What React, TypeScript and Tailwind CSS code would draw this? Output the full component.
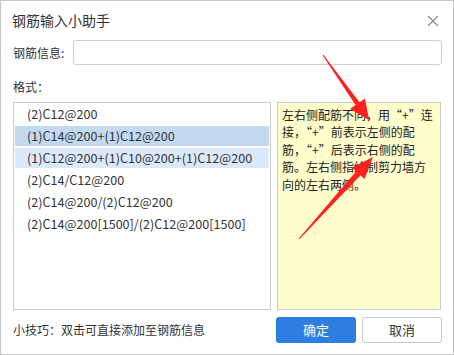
import React from "react";

const formats = [
  "(2)C12@200",
  "(1)C14@200+(1)C12@200",
  "(1)C12@200+(1)C10@200+(1)C12@200",
  "(2)C14/C12@200",
  "(2)C14@200/(2)C12@200",
  "(2)C14@200[1500]/(2)C12@200[1500]",
];

const tipLines = [
  "左右侧配筋不同，用“+”连",
  "接，“+”前表示左侧的配",
  "筋，“+”后表示右侧的配",
  "筋。左右侧指绘制剪力墙方",
  "向的左右两侧。",
];

export default function App() {
  const selected = 1;
  const hovered = 2;

  return (
    <div
      className="relative flex h-[355px] w-[454px] flex-col border border-[#c6c6c6] bg-white text-[12px] text-[#333]"
      style={{ fontFamily: '"Noto Sans CJK SC", "Noto Sans", sans-serif' }}
    >
      {/* 标题栏 */}
      <div className="flex h-[39px] items-center justify-between pl-[11px] pr-[14px]">
        <span className="text-[14px] text-[#333]">钢筋输入小助手</span>
        <svg width="12" height="12" viewBox="0 0 12 12" className="text-[#8a8a8a]">
          <path d="M1 1L11 11M11 1L1 11" stroke="currentColor" strokeWidth="1.2" />
        </svg>
      </div>

      {/* 输入 */}
      <div className="flex h-[25px] items-center pl-[12px] pr-[11px]">
        <span className="w-[60px] shrink-0">钢筋信息:</span>
        <input className="h-[25px] flex-1 rounded-[3px] border border-[#cfcfcf] bg-white px-2 outline-none" />
      </div>

      <div className="mt-[13px] pl-[12px] leading-[18px]">格式：</div>

      {/* 格式列表 + 说明 */}
      <div className="mt-[6px] flex h-[208px] gap-[6px] pl-[12px] pr-[12px]">
        <div className="flex w-[258px] flex-col gap-[2px] border border-[#cccccc] p-[1px]">
          {formats.map((f, i) => (
            <div
              key={f}
              className={`flex h-[20px] items-center pl-[12px] text-[12.6px] ${
                i === selected ? "bg-[#c3d9f0]" : i === hovered ? "bg-[#dae9fb]" : ""
              }`}
            >
              {f}
            </div>
          ))}
        </div>
        <div className="flex-1 border border-[#cccccc] bg-[#fffdcb] pl-[4px] pt-[3px] leading-[17.4px] text-[#222]">
          {tipLines.map((l) => (
            <div key={l} className="whitespace-nowrap">
              {l}
            </div>
          ))}
        </div>
      </div>

      {/* 底部 */}
      <div className="mt-[7px] flex items-center pl-[12px] pr-[11px]">
        <span className="flex-1">小技巧：双击可直接添加至钢筋信息</span>
        <button className="h-[26px] w-[80px] rounded-[3px] bg-[#2d7ee0] text-[13px] text-white">确定</button>
        <button className="ml-[6px] h-[26px] w-[80px] rounded-[3px] border border-[#cccccc] bg-white text-[13px] text-[#333]">
          取消
        </button>
      </div>

      {/* 红色标注箭头 */}
      <svg className="pointer-events-none absolute left-[-1px] top-[-1px]" width="454" height="355">
        <polygon
          fill="#ff2020"
          points="322.6,55.3 355.5,105.1 350,109 369,120 365,98.5 359.5,102.3 323.4,54.7"
        />
        <polygon
          fill="#ff2020"
          points="299.4,239.3 360.5,175.3 364.5,179 373,157 352,167.5 356.1,171.3 298.6,238.7"
        />
      </svg>
    </div>
  );
}
